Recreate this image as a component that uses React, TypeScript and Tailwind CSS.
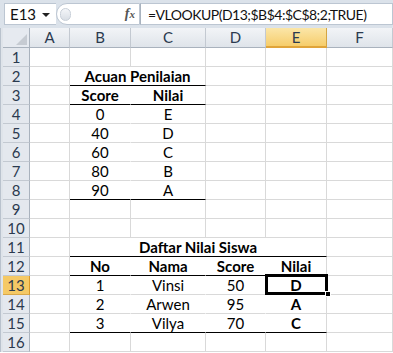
import React from "react";

type Cell = { t?: string; b?: boolean };

const COLS = ["A", "B", "C", "D", "E", "F"];
const W = ["w-[40px]", "w-[61px]", "w-[75px]", "w-[60px]", "w-[61px]", "w-[66px]"];

const data: Record<number, Record<number, Cell>> = {
  3: { 1: { t: "Score", b: true }, 2: { t: "Nilai", b: true } },
  4: { 1: { t: "0" }, 2: { t: "E" } },
  5: { 1: { t: "40" }, 2: { t: "D" } },
  6: { 1: { t: "60" }, 2: { t: "C" } },
  7: { 1: { t: "80" }, 2: { t: "B" } },
  8: { 1: { t: "90" }, 2: { t: "A" } },
  12: { 1: { t: "No", b: true }, 2: { t: "Nama", b: true }, 3: { t: "Score", b: true }, 4: { t: "Nilai", b: true } },
  13: { 1: { t: "1" }, 2: { t: "Vinsi" }, 3: { t: "50" }, 4: { t: "D", b: true } },
  14: { 1: { t: "2" }, 2: { t: "Arwen" }, 3: { t: "95" }, 4: { t: "A", b: true } },
  15: { 1: { t: "3" }, 2: { t: "Vilya" }, 3: { t: "70" }, 4: { t: "C", b: true } },
};

function inTable1(r: number, c: number) {
  return r >= 2 && r <= 8 && c >= 1 && c <= 2;
}
function inTable2(r: number, c: number) {
  return r >= 11 && r <= 15 && c >= 1 && c <= 4;
}
function blackBottom(r: number, c: number) {
  if ((r === 2 || r === 3 || r === 8) && c >= 1 && c <= 2) return true;
  if ((r === 11 || r === 12 || r === 15) && c >= 1 && c <= 4) return true;
  return false;
}
function hideRight(r: number, c: number) {
  if (inTable1(r, c) && c < 2) return true;
  if (inTable2(r, c) && c < 4) return true;
  return false;
}

function RowCells({ r }: { r: number }) {
  const cells: React.ReactNode[] = [];
  for (let c = 0; c < 6; c++) {
    if (r === 2 && c === 1) {
      cells.push(
        <div key={c} className="w-[136px] h-[19px] border-b border-b-black border-r border-r-[#d9d9d9] flex items-center justify-center font-bold">
          Acuan Penilaian
        </div>
      );
      c = 2;
      continue;
    }
    if (r === 11 && c === 1) {
      cells.push(
        <div key={c} className="w-[257px] h-[19px] border-b border-b-black border-r border-r-[#d9d9d9] flex items-center justify-center font-bold">
          Daftar Nilai Siswa
        </div>
      );
      c = 4;
      continue;
    }
    const cell = data[r]?.[c];
    const bb = blackBottom(r, c);
    const hr = hideRight(r, c);
    cells.push(
      <div
        key={c}
        className={
          W[c] +
          " h-[19px] flex items-center justify-center border-b border-r " +
          (bb ? "border-b-black " : "border-b-[#d9d9d9] ") +
          (hr ? "border-r-white" : "border-r-[#d9d9d9]") +
          (cell?.b ? " font-bold" : "")
        }
      >
        {cell?.t}
      </div>
    );
  }
  return <>{cells}</>;
}

export default function App() {
  const rows = Array.from({ length: 16 }, (_, i) => i + 1);
  return (
    <div className="w-[393px] h-[353px] overflow-hidden bg-white relative" style={{ fontFamily: "Lato, 'Liberation Sans', sans-serif" }}>
      {/* formula bar */}
      <div className="flex h-[28px] bg-[#dbe2ea] pl-[4px] pt-[3px] pb-[3px]">
        <div className="w-[52px] bg-white border border-[#bcc6d2] border-r-0 flex items-center pl-[5px] relative text-[15px] text-[#111]">
          <span className="leading-none">E13</span>
          <span className="absolute left-[37px] top-[9px] w-0 h-0 border-l-[4px] border-r-[4px] border-t-[4px] border-l-transparent border-r-transparent border-t-[#222]" />
        </div>
        <div className="w-[84px] bg-white border border-[#bcc6d2] rounded-l-[12px] flex items-center relative">
          <div className="ml-[3px] w-[11px] h-[13px] rounded-full border border-[#c8cfd8] bg-gradient-to-b from-[#f4f6f9] to-[#d9dee5]" />
          <span className="ml-auto mr-[4px] text-[#555] font-bold italic text-[14px] leading-none" style={{ fontFamily: "'Liberation Serif', serif" }}>
            f<span className="text-[11px]">x</span>
          </span>
        </div>
        <div className="flex-1 bg-white border border-[#bcc6d2] border-l-[#a9b3bf] flex items-center pl-[7px] text-[14px] tracking-[-0.5px] text-[#111] whitespace-nowrap">
          =VLOOKUP(D13;$B$4:$C$8;2;TRUE)
        </div>
      </div>

      {/* sheet */}
      <div className="flex">
        <div className="w-[3px] flex">
          <div className="w-[1px] bg-[#b9c2cd]" />
          <div className="w-[2px] bg-[#dfe4ea]" />
        </div>
        <div className="flex flex-col">
          {/* column headers */}
          <div className="flex h-[20px]">
            <div className="w-[27px] h-[20px] bg-[#e6eaf0] border-r border-b border-[#a9b2bd] relative">
              <div className="absolute right-[2px] bottom-[2px] w-0 h-0" style={{ borderRight: "0", borderBottom: "11px solid #c6cbd2", borderLeft: "11px solid transparent", borderTop: "0" }} />
            </div>
            {COLS.map((c, i) =>
              c === "E" ? (
                <div key={c} className={W[i] + " h-[20px] flex items-center justify-center bg-gradient-to-b from-[#fbe6a8] to-[#f6cd6a] border-r border-r-[#d4a543] border-b-2 border-b-[#e0a43a] text-[15px] text-[#2b3a4f]"}>
                  {c}
                </div>
              ) : (
                <div key={c} className={W[i] + " h-[20px] flex items-center justify-center bg-gradient-to-b from-[#f2f4f7] to-[#dfe4ea] border-r border-r-[#c3c9d1] border-b border-b-[#a9b2bd] text-[15px] text-[#2b3a4f]"}>
                  {c}
                </div>
              )
            )}
          </div>
          {rows.map((r) => (
            <div key={r} className="flex h-[19px] text-[15px] text-black">
              {r === 13 ? (
                <div className="w-[27px] h-[19px] flex items-center justify-center bg-[#f5c965] border-r border-r-[#d99a2c] border-b border-b-[#d9a84a] text-[15px] text-[#2b3a4f]">
                  {r}
                </div>
              ) : (
                <div className="w-[27px] h-[19px] flex items-center justify-center bg-[#e4e8ee] border-r border-r-[#a9b2bd] border-b border-b-[#c3c9d1] text-[15px] text-[#2b3a4f]">
                  {r}
                </div>
              )}
              <RowCells r={r} />
            </div>
          ))}
        </div>
      </div>

      {/* selection */}
      <div className="absolute left-[265px] top-[274px] w-[63px] h-[21px] border-[3px] border-black pointer-events-none" />
      <div className="absolute left-[325px] top-[291px] w-[6px] h-[6px] bg-black border border-white pointer-events-none" />
    </div>
  );
}
